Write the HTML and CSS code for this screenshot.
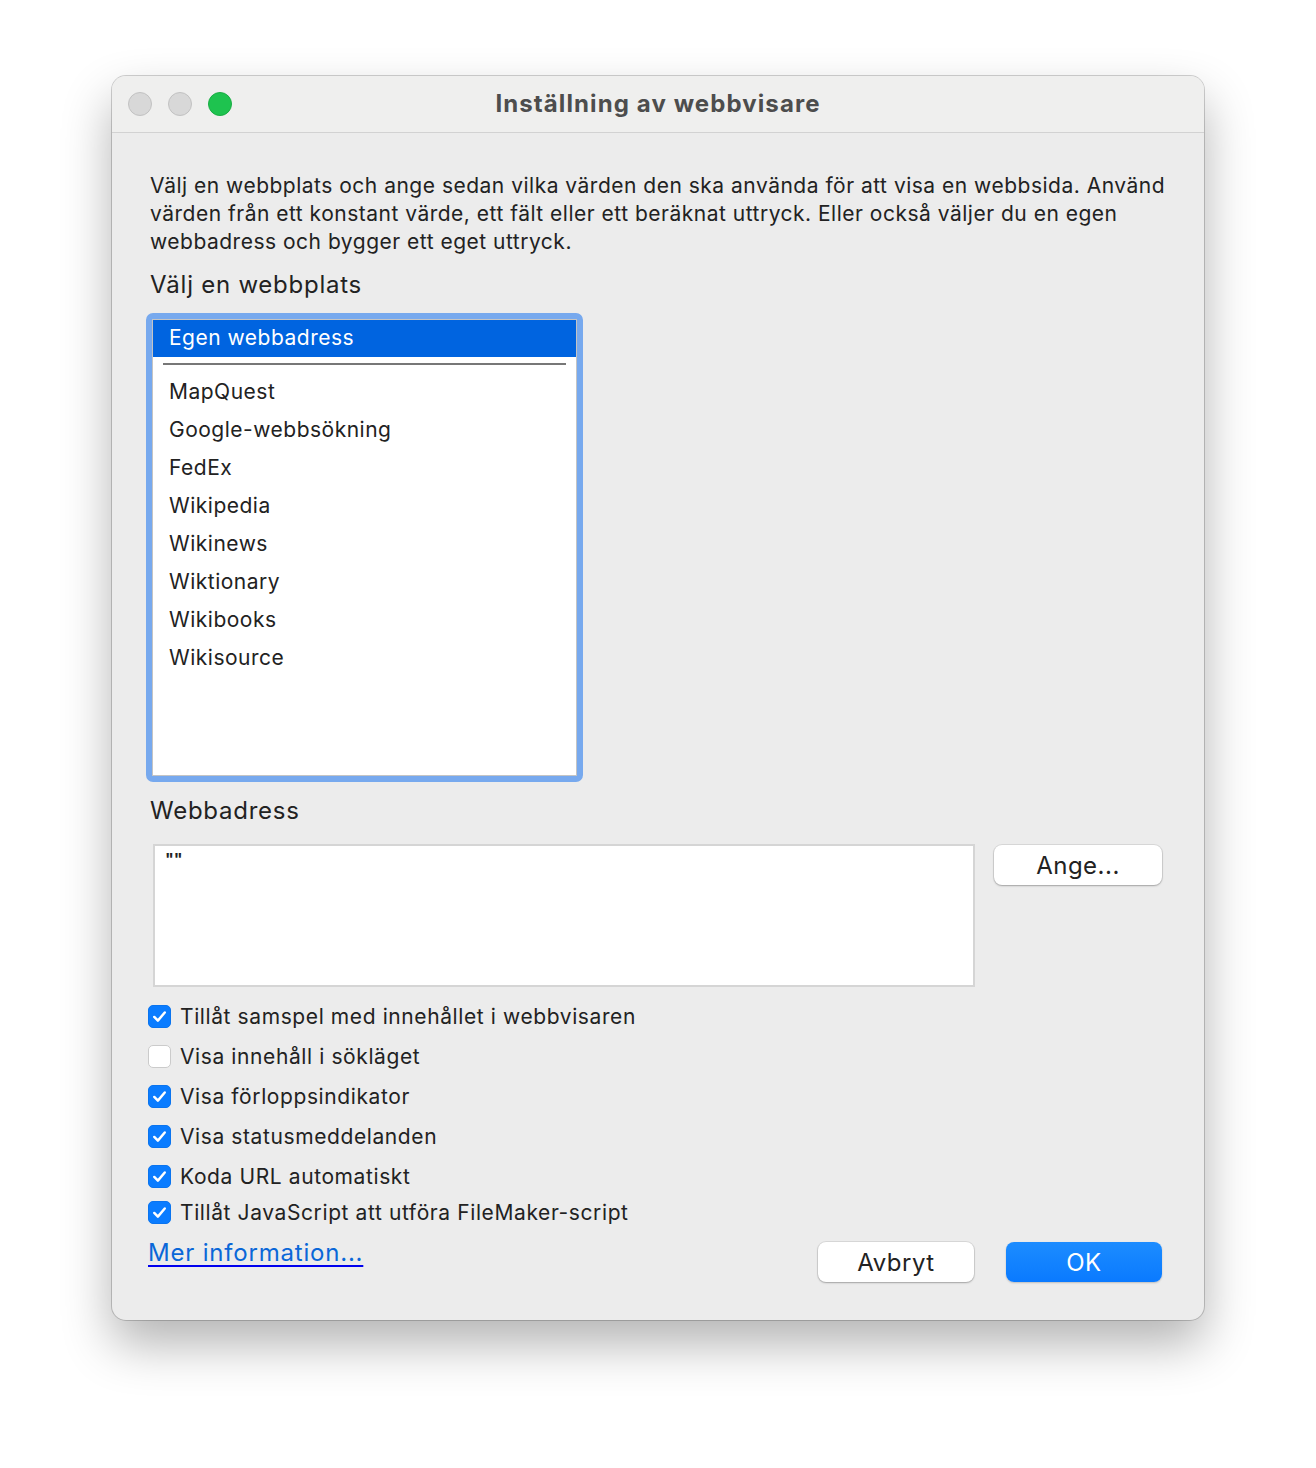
FILE: index.html
```html
<!DOCTYPE html>
<html lang="sv">
<head>
  <meta charset="UTF-8" />
  <meta name="viewport" content="width=device-width, initial-scale=1.0" />
  <title>Inställning av webbvisare</title>
  <link rel="stylesheet" href="styles.css">
</head>
<body>
  <div class="window">
    <div class="titlebar">
      <div class="lights">
        <span class="light"></span>
        <span class="light"></span>
        <span class="light green"></span>
      </div>
      <div class="title">Inställning av webbvisare</div>
    </div>

    <div class="content">
      <p class="intro">Välj en webbplats och ange sedan vilka värden den ska använda för att visa en webbsida. Använd värden från ett konstant värde, ett fält eller ett beräknat uttryck. Eller också väljer du en egen webbadress och bygger ett eget uttryck.</p>

      <div class="label">Välj en webbplats</div>
      <div class="site-list">
        <div class="site-inner">
          <div class="site selected">Egen webbadress</div>
          <div class="sep"></div>
          <div class="site">MapQuest</div>
          <div class="site">Google-webbsökning</div>
          <div class="site">FedEx</div>
          <div class="site">Wikipedia</div>
          <div class="site">Wikinews</div>
          <div class="site">Wiktionary</div>
          <div class="site">Wikibooks</div>
          <div class="site">Wikisource</div>
        </div>
      </div>

      <div class="label url-label">Webbadress</div>
      <div class="url-row">
        <div class="url-box">""</div>
        <button class="btn">Ange...</button>
      </div>

      <div class="checks">
        <label class="check"><span class="box on"><svg viewBox="0 0 22 22"><path d="M5.5 11.5 L9.3 15.3 L16.5 6.8" /></svg></span>Tillåt samspel med innehållet i webbvisaren</label>
        <label class="check"><span class="box"></span>Visa innehåll i sökläget</label>
        <label class="check"><span class="box on"><svg viewBox="0 0 22 22"><path d="M5.5 11.5 L9.3 15.3 L16.5 6.8" /></svg></span>Visa förloppsindikator</label>
        <label class="check"><span class="box on"><svg viewBox="0 0 22 22"><path d="M5.5 11.5 L9.3 15.3 L16.5 6.8" /></svg></span>Visa statusmeddelanden</label>
        <label class="check"><span class="box on"><svg viewBox="0 0 22 22"><path d="M5.5 11.5 L9.3 15.3 L16.5 6.8" /></svg></span>Koda URL automatiskt</label>
        <label class="check last"><span class="box on"><svg viewBox="0 0 22 22"><path d="M5.5 11.5 L9.3 15.3 L16.5 6.8" /></svg></span>Tillåt JavaScript att utföra FileMaker-script</label>
      </div>

      <div class="footer">
        <a class="more" href="#">Mer information...</a>
        <div class="actions">
          <button class="btn">Avbryt</button>
          <button class="btn primary">OK</button>
        </div>
      </div>
    </div>
  </div>
</body>
</html>
```

FILE: styles.css
```css
html {
  overflow: hidden;
}
body {
  margin: 0;
  padding-top: 76px;
  height: 1468px;
  box-sizing: border-box;
  background: #fff;
  font-family: Inter, "Noto Sans", sans-serif;
  color: #202020;
}
.window {
  margin-left: 112px;
  width: 1092px;
  height: 1244px;
  background: #ececec;
  border-radius: 14px;
  overflow: hidden;
  box-shadow: 0 0 0 1px rgba(0, 0, 0, 0.18), 0 24px 50px rgba(0, 0, 0, 0.3);
}
.titlebar {
  height: 56px;
  background: #efefee;
  border-bottom: 1px solid #d2d2d2;
  display: flex;
  align-items: center;
  position: relative;
}
.lights {
  display: flex;
  gap: 16px;
  padding-left: 16px;
}
.light {
  width: 22px;
  height: 22px;
  border-radius: 50%;
  background: #d8d8d8;
  border: 1px solid #c2c2c2;
}
.light.green {
  background: #1ec34f;
  border-color: #19ad43;
}
.title {
  position: absolute;
  left: 0;
  right: 0;
  top: 14px;
  text-align: center;
  font-size: 24px;
  line-height: 28px;
  font-weight: 700;
  color: #4d4d4d;
  letter-spacing: 1.1px;
}
.content {
  padding: 39px 38px 0 38px;
}
.intro {
  margin: 0;
  font-size: 21px;
  line-height: 28px;
  letter-spacing: 0.5px;
  color: #222;
}
.label {
  font-size: 24px;
  line-height: 30px;
  margin-top: 14px;
  color: #222;
  letter-spacing: 0.75px;
}
.site-list {
  margin: 13px 0 0 -4px;
  width: 425px;
  height: 457px;
  border: 6px solid #77a9ee;
  border-radius: 7px;
}
.site-inner {
  height: 100%;
  background: #fff;
  border: 1px solid #c4c4c4;
  box-sizing: border-box;
}
.site {
  height: 38px;
  line-height: 40px;
  padding-left: 16px;
  font-size: 21px;
  letter-spacing: 0.5px;
  color: #222;
}
.site.selected {
  height: 37px;
  line-height: 35px;
  background: #0064e0;
  color: #fff;
}
.sep {
  height: 2px;
  background: #777;
  margin: 6px 10px 7px 10px;
}
.url-label {
  margin-top: 14px;
}
.url-row {
  display: flex;
  align-items: flex-start;
  margin-top: 18px;
  margin-left: 3px;
}
.url-box {
  width: 822px;
  height: 143px;
  background: #fff;
  border: 2px solid #d5d5d5;
  font-size: 16px;
  font-weight: 700;
  padding: 3px 10px;
  box-sizing: border-box;
  color: #222;
}
.btn {
  font-family: Inter, "Noto Sans", sans-serif;
  font-size: 24px;
  color: #222;
  background: #fff;
  border: none;
  border-radius: 8px;
  width: 168px;
  height: 40px;
  box-shadow: 0 0 0 1px rgba(0, 0, 0, 0.08), 0 1px 2px rgba(0, 0, 0, 0.25);
  letter-spacing: 0.5px;
}
.url-row .btn {
  margin: 1px 0 0 19px;
}
.checks {
  margin: 9px 0 0 -2px;
  display: flex;
  flex-direction: column;
}
.check {
  display: flex;
  align-items: center;
  height: 40px;
  font-size: 21px;
  color: #222;
  letter-spacing: 0.6px;
}
.check.last {
  margin-top: -4px;
}
.box {
  width: 23px;
  height: 23px;
  box-sizing: border-box;
  border-radius: 5px;
  background: #fff;
  border: 1px solid #cbcbcb;
  margin-right: 9px;
  display: flex;
}
.box.on {
  background: #0a7cff;
  border-color: #0a74ef;
}
.box svg {
  width: 100%;
  height: 100%;
  fill: none;
  stroke: #fff;
  stroke-width: 2.6;
  stroke-linecap: round;
  stroke-linejoin: round;
}
.footer {
  display: flex;
  justify-content: space-between;
  align-items: flex-start;
  margin: 9px 4px 0 -2px;
}
.more {
  font-size: 24px;
  color: #0a67d8;
  text-decoration-color: #0000ee;
  text-decoration-thickness: 2px;
  text-underline-offset: 4px;
  letter-spacing: 0.8px;
  line-height: 30px;
  margin-top: -3px;
}
.actions {
  display: flex;
  gap: 32px;
  margin-top: 1px;
}
.actions .btn {
  width: 156px;
}
.btn.primary {
  background: linear-gradient(#1c8cff, #0a7aff);
  color: #fff;
  box-shadow: 0 1px 2px rgba(0, 0, 0, 0.2);
}
```
